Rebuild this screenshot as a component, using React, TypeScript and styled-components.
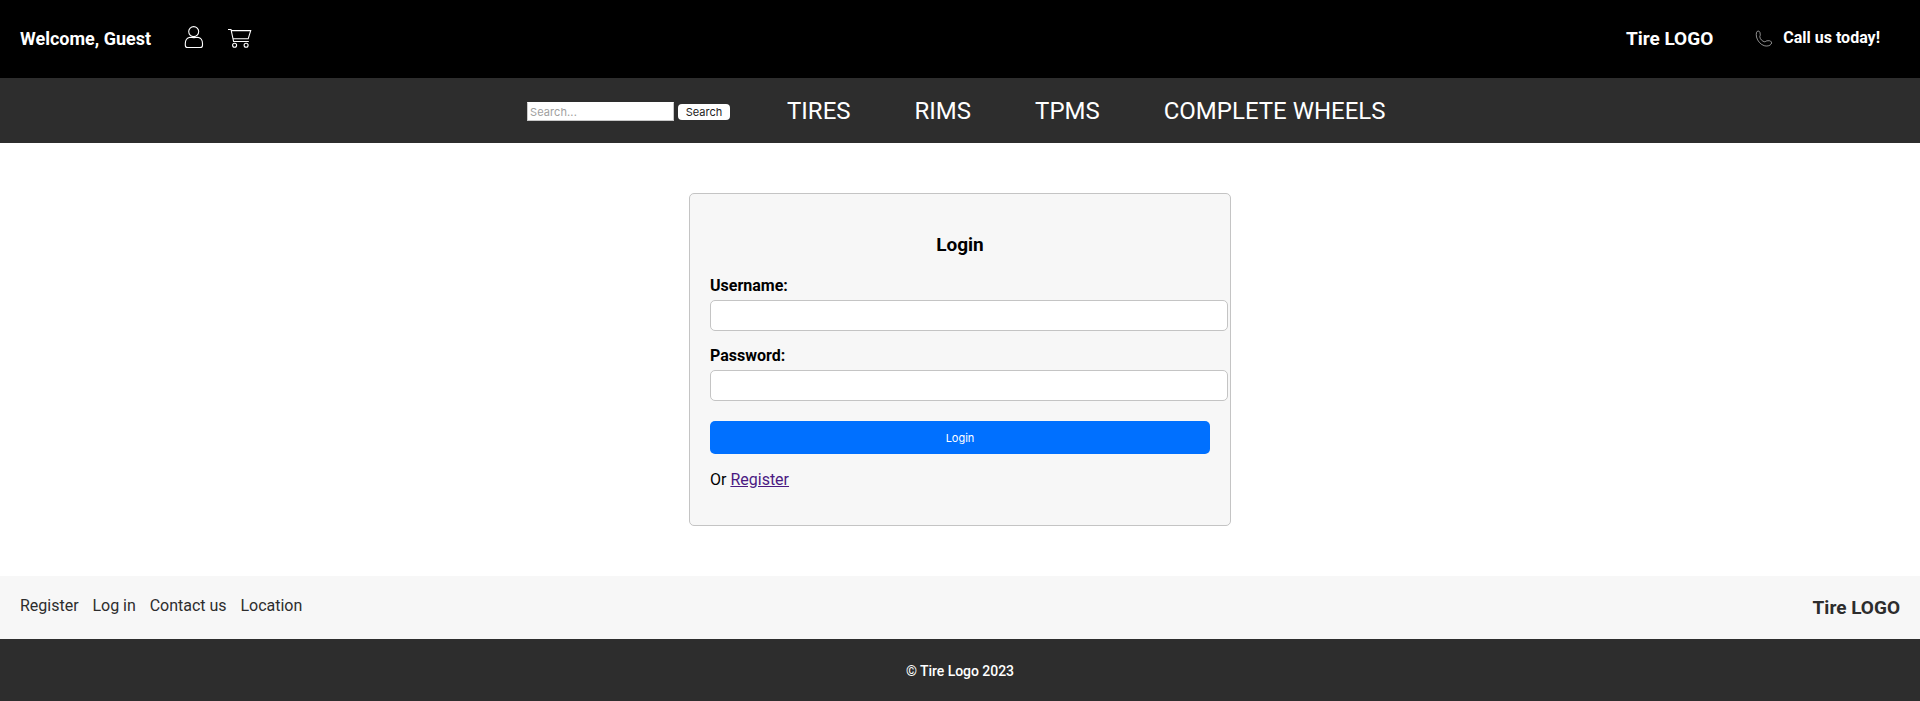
import React from "react";
import styled, { createGlobalStyle } from "styled-components";

const GlobalStyle = createGlobalStyle`
  * { box-sizing: border-box; }
  body {
    margin: 0;
    background: #fff;
    color: #000;
    font-family: Roboto, "Liberation Sans", sans-serif;
    font-size: 16px;
  }
`;

const Header = styled.header`
  display: flex;
  justify-content: space-between;
  align-items: center;
  height: 78px;
  padding: 0 40px 0 20px;
  background: #000;
  color: #fff;
`;

const HeaderGroup = styled.div`
  display: flex;
  align-items: center;
`;

const Welcome = styled.span`
  width: 164px;
  font-size: 18px;
  font-weight: 700;
  line-height: 24px;
`;

const UserIcon = styled.svg`
  width: 20px;
  height: 24px;
  margin: 0 23px 4px 0;
`;

const CartIcon = styled.svg`
  width: 25px;
  height: 22px;
`;

const Brand = styled.span<{ $dark?: boolean }>`
  font-size: 19px;
  font-weight: 700;
  line-height: 24px;
  color: ${(p) => (p.$dark ? "#2d2d2d" : "#fff")};
`;

const PhoneIcon = styled.svg`
  width: 18px;
  height: 18px;
  margin: 0 10px 0 42px;
`;

const CallText = styled.span`
  font-weight: 700;
  line-height: 20px;
  padding-bottom: 3px;
`;

const Nav = styled.nav`
  display: flex;
  align-items: center;
  height: 65px;
  padding-left: 527px;
  background: #2d2d2d;
`;

const SearchForm = styled.form`
  display: flex;
  align-items: center;
  gap: 4px;
  margin-right: 57px;
  padding-top: 2px;
`;

const SearchInput = styled.input`
  width: 147px;
  height: 19px;
  padding: 1px 2px;
  border: 1px solid #c8c8c8;
  border-top-color: #fff;
  border-radius: 0;
  background: #fff;
  font: 11px/13px Inter, sans-serif;
  letter-spacing: 0.1px;
  &::placeholder {
    color: #a0a0a0;
    opacity: 1;
  }
`;

const SearchButton = styled.button`
  width: 52px;
  height: 16px;
  padding: 0;
  border: 0;
  border-radius: 4px;
  background: #fff;
  color: #222;
  font: 11px/16px Inter, sans-serif;
`;

const NavLinks = styled.div`
  display: flex;
  gap: 64px;
`;

const NavLink = styled.a`
  color: #fff;
  font-size: 24px;
  line-height: 28px;
`;

const Main = styled.main`
  display: flex;
  justify-content: center;
  padding: 50px 0;
`;

const Card = styled.form`
  width: 542px;
  height: 333px;
  padding: 37px 20px 20px;
  border: 1px solid #c4c4c4;
  border-radius: 5px;
  background: #f7f7f7;
`;

const Title = styled.h3`
  margin: 0 0 17px;
  font-size: 19px;
  line-height: 28px;
  text-align: center;
`;

const Label = styled.label`
  display: block;
  font-weight: 700;
  line-height: 20px;
`;

const Field = styled.input`
  display: block;
  width: 518px;
  height: 31px;
  margin: 4px 0 15px;
  padding: 8px;
  border: 1px solid #c4c4c4;
  border-radius: 5px;
  background: #fff;
`;

const LoginButton = styled.button`
  display: block;
  width: 100%;
  height: 33px;
  margin-top: 20px;
  padding: 2px 0 0;
  border: 0;
  border-radius: 5px;
  background: #0070ff;
  color: #fff;
  font: 11px/31px Inter, sans-serif;
`;

const RegisterLine = styled.p`
  margin: 16px 0 0;
  line-height: 19px;
`;

const RegisterLink = styled.a`
  color: #4b1a82;
  text-decoration: underline;
`;

const FooterBar = styled.div`
  display: flex;
  justify-content: space-between;
  align-items: center;
  height: 63px;
  padding: 0 20px;
  background: #f7f7f7;
`;

const FooterLinks = styled.div`
  display: flex;
  gap: 13.8px;
  padding-bottom: 4px;
`;

const FooterLink = styled.a`
  color: #2d2d2d;
  line-height: 20px;
`;

const Copyright = styled.div`
  height: 62px;
  background: #2d2d2d;
  color: #fff;
  font-size: 14px;
  font-weight: 500;
  letter-spacing: -0.05px;
  line-height: 64px;
  text-align: center;
`;

const NAV = ["TIRES", "RIMS", "TPMS", "COMPLETE WHEELS"];
const FOOTER = ["Register", "Log in", "Contact us", "Location"];

export default function App() {
  return (
    <>
      <GlobalStyle />
      <Header>
        <HeaderGroup>
          <Welcome>Welcome, Guest</Welcome>
          <UserIcon viewBox="0 0 20 24" fill="none" stroke="#fff" strokeWidth="1.1">
            <circle cx="9.7" cy="6.6" r="5" />
            <path d="M6 12.200C2.800 12.800 1.300 15.300 1.300 18.600v1.600c0 1.500.8 2.300 2.300 2.300h12.600c1.500 0 2.300-.8 2.300-2.300v-1.600c0-3.300-1.500-5.800-4.700-6.400-2.300.5-5.500.5-7.800 0Z" />
          </UserIcon>
          <CartIcon viewBox="0 0 25 22" fill="none" stroke="#fff" strokeWidth="1.1">
            <path d="M1 1.500h3l2.600 12h15.200M4.500 2.600h19.200l-2.500 8.200H6.200" />
            <circle cx="7.600" cy="17.200" r="2" />
            <circle cx="19.100" cy="17.200" r="2" />
          </CartIcon>
        </HeaderGroup>
        <HeaderGroup>
          <Brand>Tire LOGO</Brand>
          <PhoneIcon viewBox="0 0 18 18" fill="none" stroke="#ccc" strokeWidth="0.7">
            <path d="M1.600 2.200C2.200.7 4.300.7 4.900 2.200l.4 2.600c0 .8-.4 1.200-.5 1.800 0 2.300 2.600 5 5 5.200.700 0 1.200-.8 2-1l2.500-.1c2 .3 2.800 1.800 1.900 3.300-1.100 1.900-4.500 2.500-7 1.700C5.600 14.500 2.500 11.100 1.500 7 1.100 5.200 1.200 3.400 1.600 2.200Z" />
          </PhoneIcon>
          <CallText>Call us today!</CallText>
        </HeaderGroup>
      </Header>
      <Nav>
        <SearchForm>
          <SearchInput placeholder="Search..." />
          <SearchButton type="button">Search</SearchButton>
        </SearchForm>
        <NavLinks>
          {NAV.map((t) => (
            <NavLink key={t}>{t}</NavLink>
          ))}
        </NavLinks>
      </Nav>
      <Main>
        <Card>
          <Title>Login</Title>
          <Label htmlFor="username">Username:</Label>
          <Field id="username" />
          <Label htmlFor="password">Password:</Label>
          <Field id="password" type="password" />
          <LoginButton type="button">Login</LoginButton>
          <RegisterLine>
            Or <RegisterLink href="#">Register</RegisterLink>
          </RegisterLine>
        </Card>
      </Main>
      <footer>
        <FooterBar>
          <FooterLinks>
            {FOOTER.map((t) => (
              <FooterLink key={t}>{t}</FooterLink>
            ))}
          </FooterLinks>
          <Brand $dark>Tire LOGO</Brand>
        </FooterBar>
        <Copyright>© Tire Logo 2023</Copyright>
      </footer>
    </>
  );
}
